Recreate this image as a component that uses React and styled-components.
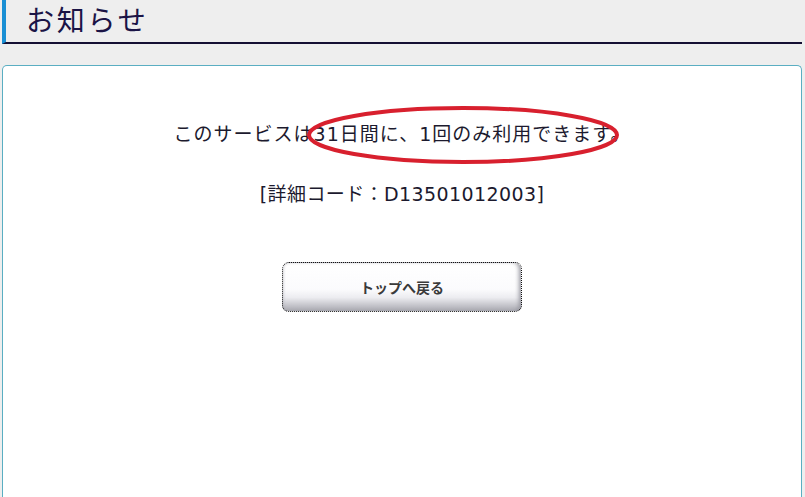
import React from "react";
import styled, { createGlobalStyle } from "styled-components";

const GlobalStyle = createGlobalStyle`
  html, body {
    margin: 0;
    padding: 0;
    background: #eeeeee;
    font-family: "DejaVu Sans", "Noto Sans CJK JP", sans-serif;
    overflow: hidden;
  }
`;

export default function App() {
  return (
    <Page>
      <GlobalStyle />
      <Header>
        <Title>お知らせ</Title>
      </Header>
      <Panel>
        <MessageLine>
          このサービスは31日間に、1回のみ利用できます。
          <Circle viewBox="0 0 316 62">
            <ellipse cx="158" cy="31" rx="154" ry="27" fill="none" stroke="#d8202e" strokeWidth="4" />
          </Circle>
        </MessageLine>
        <CodeLine>[詳細コード：D13501012003]</CodeLine>
        <BackButton>トップへ戻る</BackButton>
      </Panel>
    </Page>
  );
}

const Page = styled.div`
  height: 497px;
  padding: 0 3px 0 2px;
  display: flex;
  flex-direction: column;
`;

const Header = styled.div`
  height: 42px;
  border-left: 4px solid #1a8fd4;
  border-bottom: 2px solid #140f33;
  display: flex;
  align-items: center;
  padding-left: 20px;
`;

const Title = styled.h1`
  margin: 0 0 4px;
  font-family: "Noto Sans CJK JP", sans-serif;
  font-size: 28px;
  font-weight: 400;
  color: #1b1446;
  letter-spacing: 2.8px;
`;

const Panel = styled.div`
  margin-top: 21px;
  flex: 1;
  background: #ffffff;
  border: 1px solid #5aaec2;
  border-bottom: none;
  border-radius: 5px 5px 0 0;
  display: flex;
  flex-direction: column;
  align-items: center;
  padding-top: 54px;
`;

const MessageLine = styled.p`
  position: relative;
  margin: 0;
  font-size: 19px;
  color: #1c1a2e;
  line-height: 28px;
  letter-spacing: 1px;
`;

const Circle = styled.svg`
  position: absolute;
  left: 131px;
  top: -16px;
  width: 316px;
  height: 62px;
  overflow: visible;
  pointer-events: none;
`;

const CodeLine = styled.p`
  margin: 32px 0 0;
  font-size: 19px;
  color: #1c1a2e;
  line-height: 28px;
  letter-spacing: 0.4px;
`;

const BackButton = styled.button`
  margin-top: 54px;
  width: 240px;
  height: 50px;
  border: 1px dotted #111;
  border-radius: 7px;
  background: linear-gradient(to bottom, #ffffff 0%, #fbfbfd 55%, #ececf0 72%, #a8a8b0 100%);
  box-shadow: inset -4px 0 4px -2px #9a9aa2, inset 2px 0 3px -2px #b0b0b8;
  font-family: "Noto Sans CJK JP", sans-serif;
  font-size: 14px;
  font-weight: 700;
  color: #3a3a3a;
  cursor: pointer;
`;
